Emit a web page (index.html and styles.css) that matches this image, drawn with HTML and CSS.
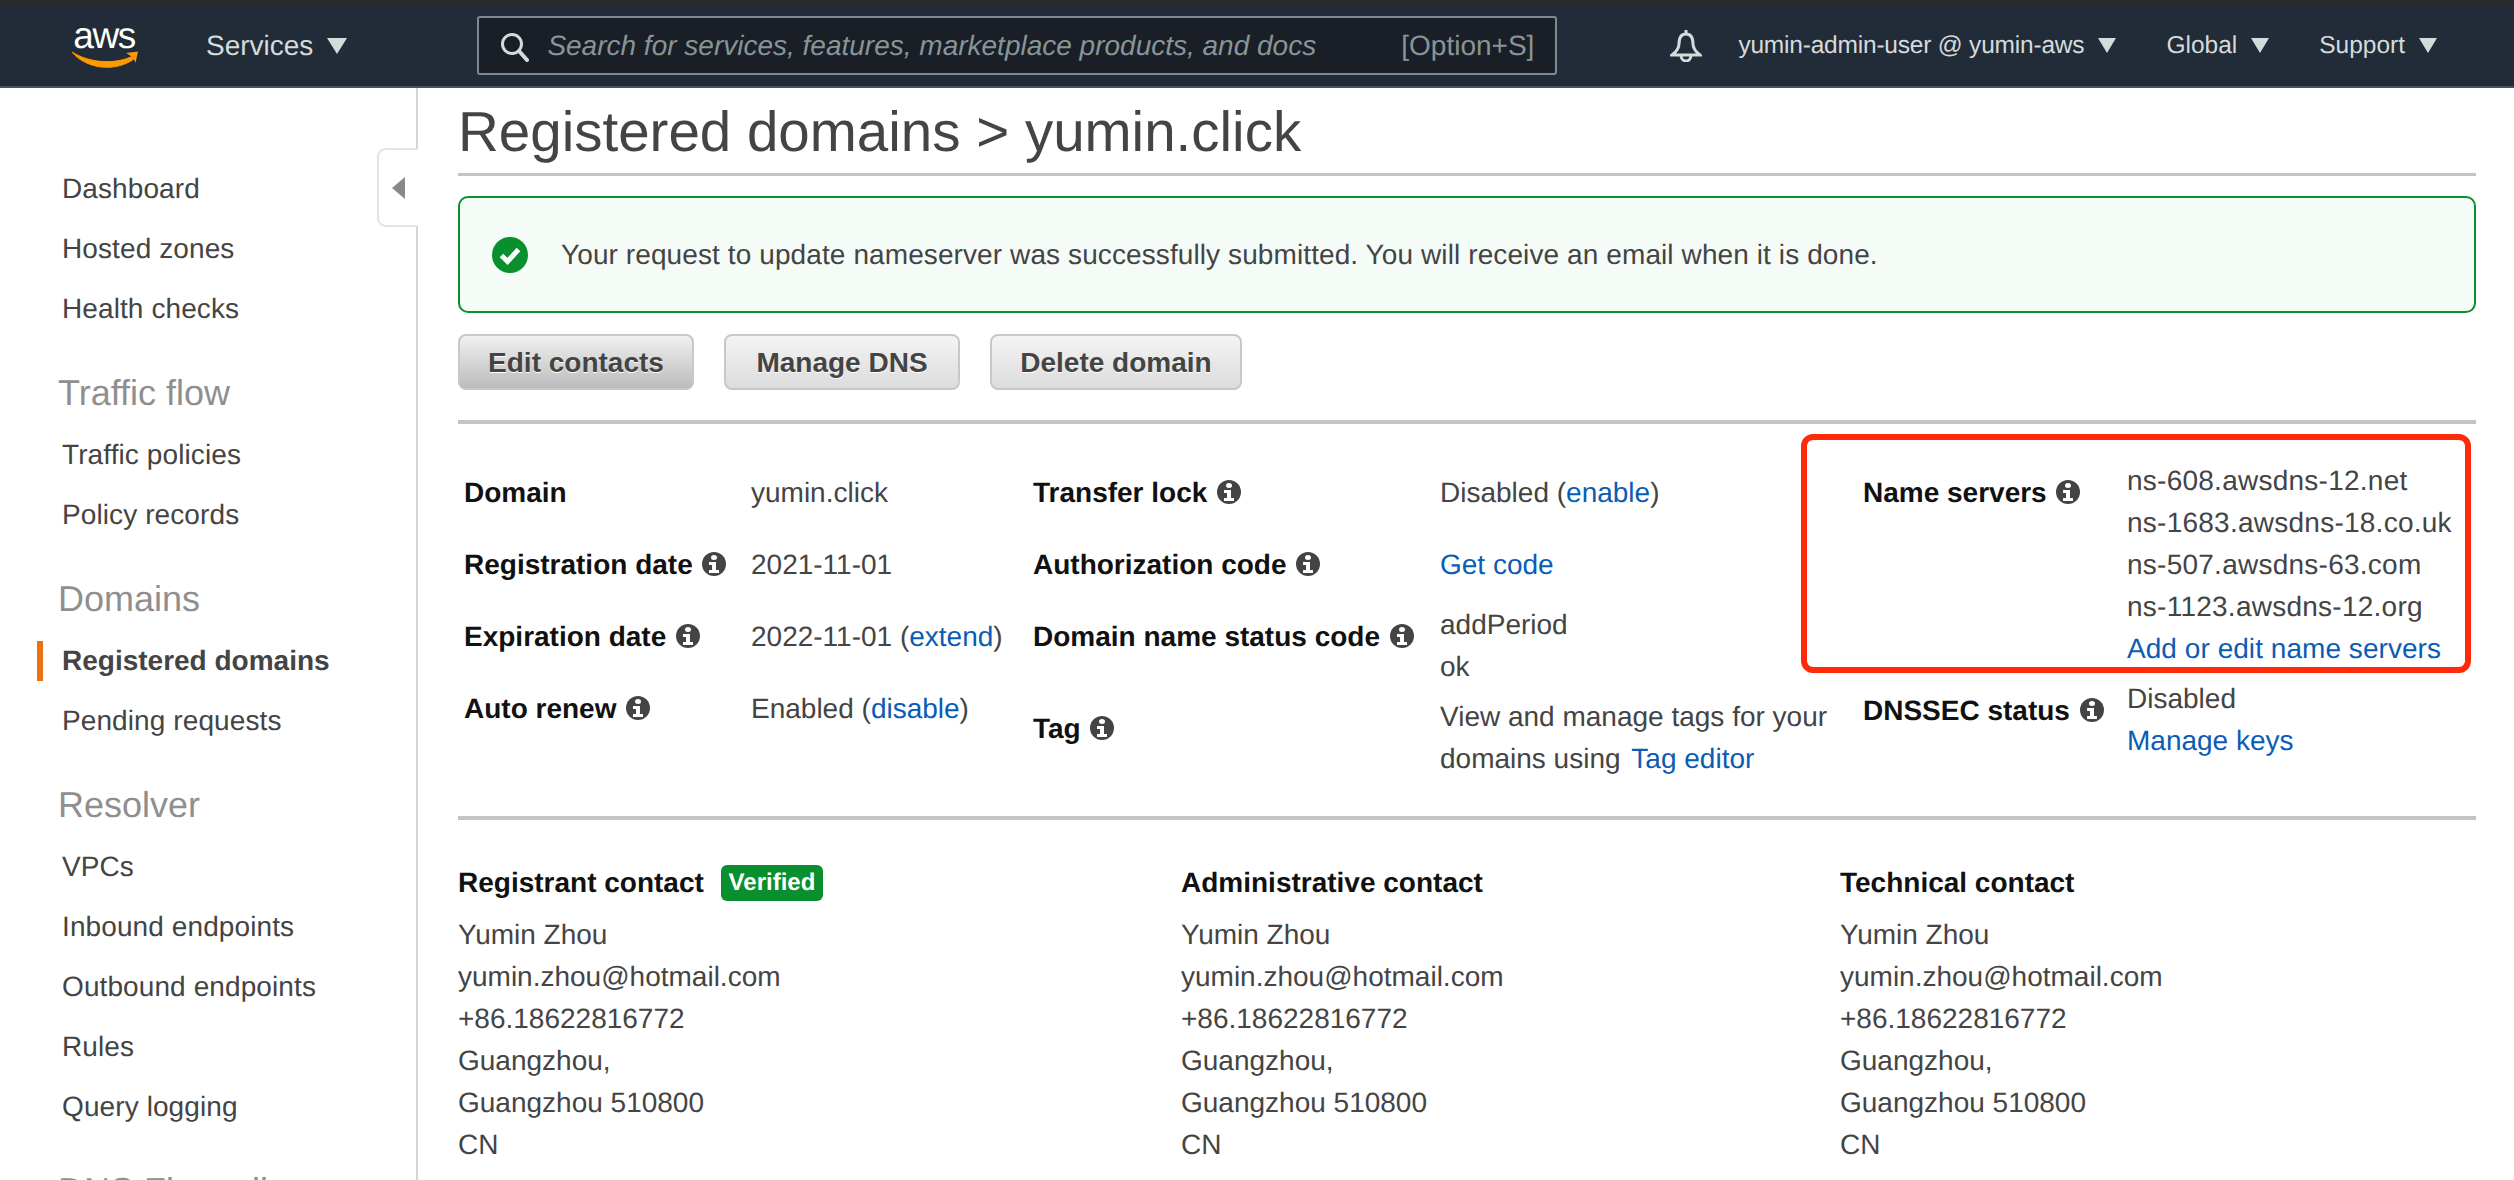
FILE: index.html
```html
<!DOCTYPE html>
<html lang="en">
<head>
<meta charset="UTF-8">
<title>Route 53 - Registered domains</title>
<link rel="stylesheet" href="styles.css">
</head>
<body>
<div class="topstrip"></div>
<header class="navbar">
    <div class="logo">
        <span class="logo-text">aws</span>
        <svg class="smile" width="68" height="18" viewBox="0 0 68 18">
            <path d="M1 2 C18 13 44 15 62 6 L63.5 8.5 C46 22 16 20 1 2 Z" fill="#f90" stroke="#f90" stroke-width="1"/>
            <path d="M55 3 L67 1.5 L64.5 13 C64 9.5 60 5.5 55 3 Z" fill="#f90"/>
        </svg>
    </div>
    <span class="nav-services">Services</span>
    <span class="caret caret-big"></span>
    <div class="search">
        <svg class="search-icon" width="30" height="30" viewBox="0 0 30 30">
            <circle cx="12" cy="12" r="9.5" fill="none" stroke="#d5dbdb" stroke-width="3"/>
            <path d="M19 19 L27 28" stroke="#d5dbdb" stroke-width="4" stroke-linecap="round"/>
        </svg>
        <span class="search-text">Search for services, features, marketplace products, and docs</span>
        <span class="search-key">[Option+S]</span>
    </div>
    <svg class="bell" width="32" height="32" viewBox="0 0 32 32">
        <path d="M16 0 V4 M16 4 C11 4 9 8 9 14 C9 19 6 22 2 25 H30 C26 22 23 19 23 14 C23 8 21 4 16 4 Z M11 25 C11 33 21 33 21 25" fill="none" stroke="#d5dbdb" stroke-width="3"/>
    </svg>
    <span class="nav-item nav-user">yumin-admin-user @ yumin-aws</span>
    <span class="caret"></span>
    <span class="nav-item nav-global">Global</span>
    <span class="caret"></span>
    <span class="nav-item nav-support">Support</span>
    <span class="caret"></span>
</header>

<div class="layout">
    <aside class="sidebar">
        <div class="collapse-tab"><span class="collapse-arrow"></span></div>
        <a class="side-item">Dashboard</a>
        <a class="side-item">Hosted zones</a>
        <a class="side-item">Health checks</a>
        <div class="side-heading">Traffic flow</div>
        <a class="side-item">Traffic policies</a>
        <a class="side-item">Policy records</a>
        <div class="side-heading">Domains</div>
        <a class="side-item active">Registered domains</a>
        <a class="side-item">Pending requests</a>
        <div class="side-heading">Resolver</div>
        <a class="side-item">VPCs</a>
        <a class="side-item">Inbound endpoints</a>
        <a class="side-item">Outbound endpoints</a>
        <a class="side-item">Rules</a>
        <a class="side-item">Query logging</a>
        <div class="side-heading">DNS Firewall</div>
    </aside>

    <main class="content">
        <h1 class="title">Registered domains &gt; yumin.click</h1>

        <div class="alert">
            <svg width="36" height="36" viewBox="0 0 36 36">
                <circle cx="18" cy="18" r="18" fill="#0a8f2e"/>
                <path d="M9.5 18.5 L15.5 24.5 L26.5 12.5" fill="none" stroke="#fff" stroke-width="5"/>
            </svg>
            <span>Your request to update nameserver was successfully submitted. You will receive an email when it is done.</span>
        </div>

        <div class="buttons">
            <button class="btn btn-pressed">Edit contacts</button>
            <button class="btn">Manage DNS</button>
            <button class="btn btn-wide">Delete domain</button>
        </div>

        <div class="details">
            <div class="col col-a">
                <div class="row">
                    <div class="label">Domain</div>
                    <div class="value">yumin.click</div>
                </div>
                <div class="row">
                    <div class="label">Registration date <i class="info"></i></div>
                    <div class="value">2021-11-01</div>
                </div>
                <div class="row">
                    <div class="label">Expiration date <i class="info"></i></div>
                    <div class="value">2022-11-01 (<a>extend</a>)</div>
                </div>
                <div class="row">
                    <div class="label">Auto renew <i class="info"></i></div>
                    <div class="value">Enabled (<a>disable</a>)</div>
                </div>
            </div>
            <div class="col col-b">
                <div class="row">
                    <div class="label">Transfer lock <i class="info"></i></div>
                    <div class="value">Disabled (<a>enable</a>)</div>
                </div>
                <div class="row">
                    <div class="label">Authorization code <i class="info"></i></div>
                    <div class="value"><a>Get code</a></div>
                </div>
                <div class="row multi">
                    <div class="label">Domain name status code <i class="info"></i></div>
                    <div class="value">addPeriod<br>ok</div>
                </div>
                <div class="row multi">
                    <div class="label">Tag <i class="info"></i></div>
                    <div class="value">View and manage tags for your<br>domains using <a class="tag-link">Tag editor</a></div>
                </div>
            </div>
            <div class="col col-c">
                <div class="row multi ns-row">
                    <div class="highlight"></div>
                    <div class="label">Name servers <i class="info"></i></div>
                    <div class="value ns-list">ns-608.awsdns-12.net<br>ns-1683.awsdns-18.co.uk<br>ns-507.awsdns-63.com<br>ns-1123.awsdns-12.org<br><a>Add or edit name servers</a></div>
                </div>
                <div class="row multi">
                    <div class="label">DNSSEC status <i class="info"></i></div>
                    <div class="value">Disabled<br><a>Manage keys</a></div>
                </div>
            </div>
        </div>

        <div class="contacts">
            <div class="contact">
                <h3>Registrant contact <span class="badge">Verified</span></h3>
                <p>Yumin Zhou<br>yumin.zhou@hotmail.com<br>+86.18622816772<br>Guangzhou,<br>Guangzhou 510800<br>CN</p>
            </div>
            <div class="contact">
                <h3>Administrative contact</h3>
                <p>Yumin Zhou<br>yumin.zhou@hotmail.com<br>+86.18622816772<br>Guangzhou,<br>Guangzhou 510800<br>CN</p>
            </div>
            <div class="contact">
                <h3>Technical contact</h3>
                <p>Yumin Zhou<br>yumin.zhou@hotmail.com<br>+86.18622816772<br>Guangzhou,<br>Guangzhou 510800<br>CN</p>
            </div>
        </div>
    </main>
</div>
</body>
</html>
```

FILE: styles.css
```css
html, body {
    margin: 0;
    height: 1180px;
    overflow: hidden;
    background: #fff;
}
body {
    font-family: "Liberation Sans", Arial, sans-serif;
    font-size: 28px;
    color: #444;
    text-rendering: geometricPrecision;
}
a {
    color: #0b5cb5;
}

/* top bar */
.topstrip {
    height: 5px;
    background: #2b2b2d;
}
.navbar {
    display: flex;
    align-items: center;
    height: 81px;
    padding-left: 70px;
    background: #222b38;
    border-bottom: 2px solid #48525e;
    color: #d5dbdb;
}
.logo {
    position: relative;
    width: 68px;
    height: 42px;
    margin-top: -4px;
}
.logo-text {
    display: block;
    font-size: 37px;
    line-height: 26px;
    letter-spacing: -1.5px;
    color: #fff;
    text-align: center;
}
.smile {
    position: absolute;
    left: 1px;
    top: 27px;
}
.nav-services {
    margin-left: 68px;
}
.caret {
    width: 0;
    height: 0;
    margin-left: 14px;
    border-left: 9px solid transparent;
    border-right: 9px solid transparent;
    border-top: 15px solid #d5dbdb;
}
.caret-big {
    border-left-width: 10px;
    border-right-width: 10px;
    border-top-width: 16px;
}
.search {
    display: flex;
    align-items: center;
    box-sizing: border-box;
    width: 1080px;
    height: 59px;
    margin-left: 130px;
    padding: 0 21px;
    background: #1a1e27;
    border: 2px solid #7d8a92;
    border-radius: 3px;
}
.search-icon {
    margin-top: 2px;
}
.search-text {
    margin-left: 17px;
    font-style: italic;
    color: #879596;
}
.search-key {
    margin-left: auto;
    color: #879596;
}
.bell {
    margin-left: 113px;
}
.nav-item {
    font-size: 24.5px;
}
.nav-user {
    margin-left: 36px;
    letter-spacing: -0.2px;
}
.nav-global, .nav-support {
    margin-left: 50px;
}

/* sidebar */
.layout {
    display: flex;
    height: 1092px;
}
.sidebar {
    position: relative;
    flex: none;
    box-sizing: border-box;
    width: 418px;
    padding-top: 71px;
    border-right: 2px solid #d5d5d5;
}
.side-item {
    display: flex;
    align-items: center;
    height: 60px;
    padding-left: 62px;
    color: #444;
    letter-spacing: 0.1px;
}
.side-item.active {
    font-weight: bold;
    letter-spacing: 0;
}
.side-item.active::before {
    content: "";
    width: 6px;
    height: 40px;
    margin-left: -25px;
    margin-right: 19px;
    background: #ec7211;
}
.side-heading {
    padding: 32px 0 10px 58px;
    font-size: 36px;
    line-height: 44px;
    color: #8f8f8f;
}
.collapse-tab {
    position: absolute;
    left: 377px;
    top: 60px;
    display: flex;
    align-items: center;
    box-sizing: border-box;
    width: 41px;
    height: 79px;
    padding-left: 13px;
    background: #fff;
    border: 2px solid #e3e3e3;
    border-right: none;
    border-radius: 9px 0 0 9px;
}
.collapse-arrow {
    width: 0;
    height: 0;
    border-top: 11px solid transparent;
    border-bottom: 11px solid transparent;
    border-right: 13px solid #888;
}

/* main column */
.content {
    flex: 1;
    padding: 0 38px 0 40px;
}
.title {
    margin: 0;
    padding-top: 2px;
    font-size: 56.5px;
    font-weight: normal;
    line-height: 83px;
    border-bottom: 3px solid #c4c4c4;
}
.alert {
    display: flex;
    align-items: center;
    box-sizing: border-box;
    height: 117px;
    margin-top: 20px;
    padding-left: 32px;
    background: #f5fcf7;
    border: 2px solid #0a8f2e;
    border-radius: 10px;
}
.alert span {
    margin-left: 33px;
    letter-spacing: 0.1px;
}
.buttons {
    display: flex;
    gap: 30px;
    margin-top: 21px;
    padding-bottom: 30px;
    border-bottom: 4px solid #c4c4c4;
}
.btn {
    box-sizing: border-box;
    width: 236px;
    height: 56px;
    padding: 1px 0 0;
    font-family: inherit;
    font-size: 28px;
    font-weight: bold;
    color: #444;
    text-shadow: 0 1px 0 #fff;
    background: linear-gradient(#f4f4f4, #dcdcdc);
    border: 2px solid #c8c8c8;
    border-radius: 8px;
}
.btn-pressed {
    background: linear-gradient(#f0f0f0, #bcbcbc);
}
.btn-wide {
    width: 252px;
}

/* details table */
.details {
    display: flex;
    height: 356px;
    margin-top: 36px;
    padding-left: 6px;
    border-bottom: 4px solid #c4c4c4;
}
.col-a { width: 569px; }
.col-b { width: 830px; }
.col-a .label { width: 287px; }
.col-b .label { width: 407px; }
.col-c .label { width: 264px; }
.row {
    display: flex;
    padding-bottom: 18px;
    line-height: 42px;
}
.label {
    flex: none;
    margin-top: 12px;
    font-weight: bold;
    color: #111;
}
.value {
    margin-top: 12px;
    white-space: nowrap;
}
.row.multi {
    padding-bottom: 8px;
}
.row.multi .value {
    margin-top: 0;
}
.ns-list {
    letter-spacing: 0.25px;
}
.ns-list a {
    letter-spacing: 0.05px;
}
.tag-link {
    margin-left: 3px;
}
.info {
    display: inline-block;
    width: 24px;
    height: 24px;
    margin-left: 2px;
    vertical-align: -2px;
    border-radius: 50%;
    background: #444;
    position: relative;
}
.info::before {
    content: "";
    position: absolute;
    left: 9px;
    top: 3px;
    width: 6px;
    height: 5px;
    background: #fff;
    border-radius: 50%;
}
.info::after {
    content: "";
    position: absolute;
    left: 7px;
    top: 10px;
    width: 10px;
    height: 11px;
    background: linear-gradient(#fff, #fff) 3px 0 / 4px 100% no-repeat,
                linear-gradient(#fff, #fff) 0 100% / 100% 3px no-repeat,
                linear-gradient(#fff, #fff) 0 0 / 6px 3px no-repeat;
}
.ns-row {
    position: relative;
}
.highlight {
    position: absolute;
    left: -62px;
    top: -26px;
    box-sizing: border-box;
    width: 670px;
    height: 239px;
    border: 6px solid #ff2a0a;
    border-radius: 12px;
}

/* contacts */
.contacts {
    display: grid;
    grid-template-columns: 723px 659px 1fr;
    margin-top: 42px;
    line-height: 42px;
}
.contact h3 {
    margin: 0;
    font-size: 28px;
    line-height: 42px;
    color: #111;
}
.contact p {
    margin: 10px 0 0;
}
.badge {
    display: inline-block;
    height: 36px;
    margin-left: 9px;
    padding: 0 8px;
    font-size: 24px;
    line-height: 36px;
    color: #fff;
    background: #0a8f2e;
    border-radius: 6px;
    vertical-align: 2px;
}
```
